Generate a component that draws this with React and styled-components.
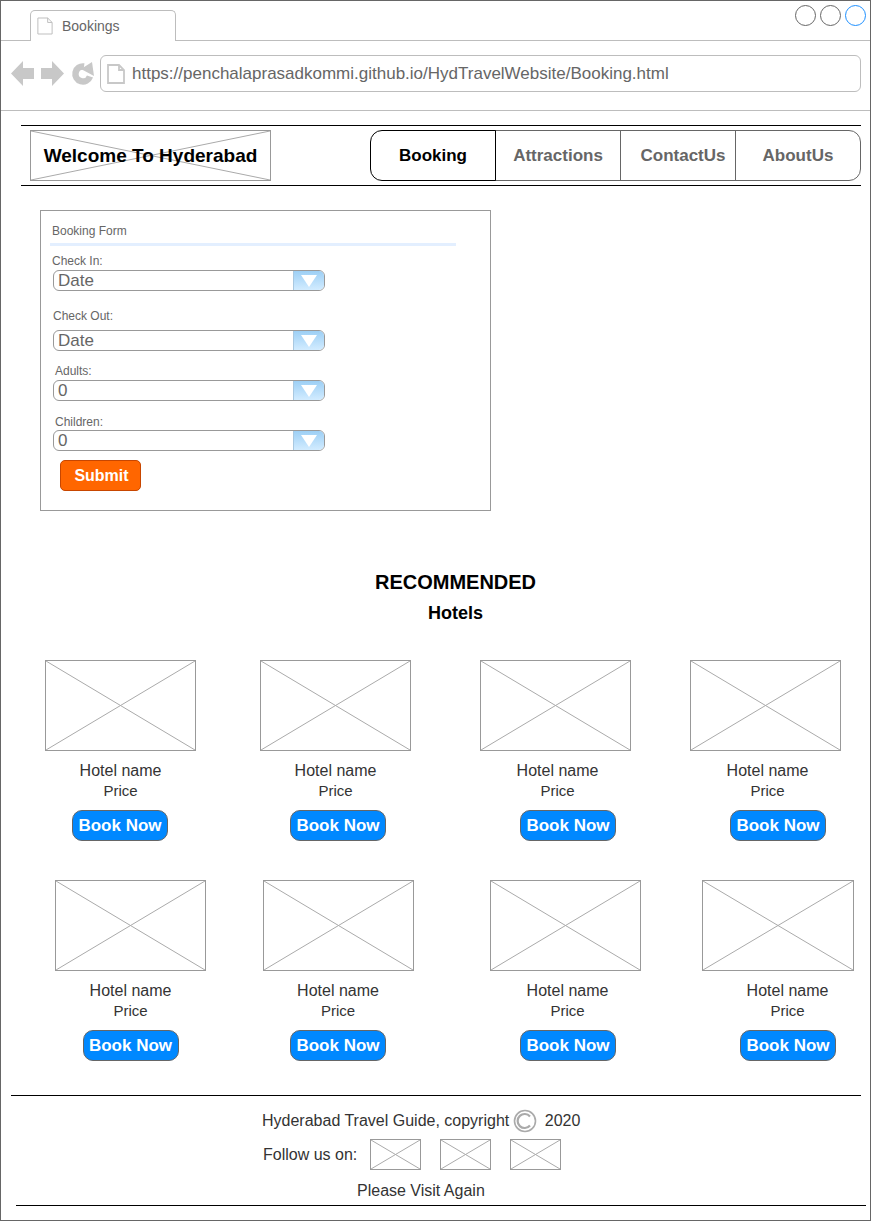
import React from "react";
import styled, { createGlobalStyle } from "styled-components";

const Global = createGlobalStyle`
  * { box-sizing: border-box; }
  html, body { margin: 0; padding: 0; background: #fff; }
  body { font-family: "Liberation Sans", Arial, sans-serif; }
`;

const Window = styled.div`
  width: 871px;
  height: 1221px;
  border: 1px solid #666;
  background: #fff;
  overflow: hidden;
`;
const TabBar = styled.div`
  height: 40px;
  display: flex;
  justify-content: space-between;
  border-bottom: 1px solid #bdbdbd;
`;
const Tab = styled.div`
  position: relative;
  margin: 9px 0 -1px 29px;
  width: 146px;
  height: 31px;
  display: flex;
  align-items: center;
  gap: 9px;
  padding: 0 0 1px 6px;
  background: #fff;
  border: 1px solid #bdbdbd;
  border-bottom: none;
  border-radius: 5px 5px 0 0;
  font-size: 14px;
  color: #666;
`;
const Dots = styled.div`
  display: flex;
  gap: 4px;
  padding: 4px 4px 0 0;
`;
const Dot = styled.span`
  width: 21px;
  height: 21px;
  border-radius: 50%;
  border: 1px solid ${p => (p.$active ? "#1e90ff" : "#666")};
`;
const AddressBar = styled.div`
  height: 70px;
  display: flex;
  align-items: flex-start;
  padding: 14px 9px 0 10px;
  border-bottom: 1px solid #bdbdbd;
`;
const NavIcons = styled.div`
  display: flex;
  gap: 7px;
  margin-top: 6px;
  margin-right: 6px;
`;
const UrlBox = styled.div`
  flex: 1;
  height: 37px;
  display: flex;
  align-items: center;
  gap: 7px;
  padding: 1px 0 0 6px;
  border: 1px solid #bdbdbd;
  border-radius: 6px;
  font-size: 17px;
  color: #666;
`;
const Header = styled.header`
  margin: 14px 0 0 20px;
  width: 840px;
  padding: 4px 0 4px 9px;
  display: flex;
  justify-content: space-between;
  border-top: 1px solid #000;
  border-bottom: 1px solid #000;
`;
const Placeholder = styled.div`
  position: relative;
  flex: none;
  width: ${p => p.$w}px;
  height: ${p => p.$h}px;
  border: 1px solid #999;
  display: flex;
  align-items: center;
  justify-content: center;
`;
const Cross = styled.svg`
  position: absolute;
  inset: 0;
  width: 100%;
  height: 100%;
`;
const LogoText = styled.span`
  position: relative;
  font-size: 19px;
  font-weight: bold;
  color: #000;
`;
const Nav = styled.nav`
  display: flex;
  height: 51px;
`;
const NavItem = styled.div`
  width: ${p => p.$w}px;
  margin-left: ${p => (p.$first ? 0 : -1)}px;
  padding-left: ${p => p.$pad || 0}px;
  display: flex;
  align-items: center;
  justify-content: center;
  font-size: 17px;
  font-weight: bold;
  color: ${p => (p.$active ? "#000" : "#666")};
  border: 1px solid ${p => (p.$active ? "#000" : "#666")};
  border-radius: ${p => (p.$first ? "12px 0 0 12px" : p.$last ? "0 12px 12px 0" : "0")};
  position: relative;
  z-index: ${p => (p.$active ? 1 : 0)};
`;
const Form = styled.form`
  margin: 24px 0 0 39px;
  width: 451px;
  height: 301px;
  border: 1px solid #999;
  display: flex;
  flex-direction: column;
  align-items: flex-start;
`;
const FormTitle = styled.div`
  margin: 13px 0 0 11px;
  font-size: 12px;
  line-height: 14px;
  color: #666;
`;
const Divider = styled.div`
  margin: 5px 0 0 9px;
  width: 406px;
  height: 3px;
  background: #e3efff;
`;
const Label = styled.label`
  margin: ${p => p.$top}px 0 ${p => p.$bottom}px ${p => p.$left}px;
  font-size: 12px;
  line-height: 14px;
  color: #666;
`;
const Select = styled.div`
  margin-left: 12px;
  width: 272px;
  height: 21px;
  display: flex;
  justify-content: space-between;
  border: 1px solid #999;
  border-radius: 6px;
  overflow: hidden;
  font-size: 17px;
  line-height: 19px;
  color: #666;
  padding-left: 4px;
`;
const SelectArrow = styled.span`
  width: 31px;
  display: flex;
  align-items: center;
  justify-content: center;
  background: linear-gradient(#9dcff5, #d2ecff);
  border-left: 1px solid #a9c8e0;
`;
const Submit = styled.button`
  margin: 9px 0 0 19px;
  width: 81px;
  height: 31px;
  padding: 0 0 0 2px;
  background: #ff6600;
  border: 1px solid #c74600;
  border-radius: 5px;
  color: #fff;
  font: bold 16px "Liberation Sans", Arial, sans-serif;
`;
const Headings = styled.div`
  padding-left: 40px;
  text-align: center;
  color: #000;
  font-weight: bold;
`;
const Heading = styled.h2`
  margin: 59px 0 0;
  font-size: 20px;
  line-height: 24px;
`;
const SubHeading = styled.h3`
  margin: 9px 0 0;
  font-size: 18px;
  line-height: 21px;
`;
const CardRow = styled.div`
  display: flex;
  margin-top: ${p => p.$top}px;
`;
const Card = styled.div`
  flex: none;
  width: ${p => p.$w || 151}px;
  margin-left: ${p => p.$gap}px;
  display: flex;
  flex-direction: column;
  align-items: center;
  color: #333;
`;
const Name = styled.div`
  margin-top: 11px;
  font-size: 16px;
  line-height: 18px;
  white-space: nowrap;
  margin-left: ${p => p.$shift * 2}px;
`;
const Price = styled.div`
  margin-top: 2px;
  font-size: 15px;
  line-height: 18px;
  margin-left: ${p => p.$shift * 2}px;
`;
const BookNow = styled.button`
  margin: 10px 0 0 ${p => p.$shift * 2}px;
  flex: none;
  width: 96px;
  height: 31px;
  padding: 0;
  background: #0088ff;
  border: 1px solid #666;
  border-radius: 10px;
  color: #fff;
  font: bold 17px "Liberation Sans", Arial, sans-serif;
`;
const FooterRule = styled.div`
  margin: ${p => p.$top}px 0 0 ${p => p.$left}px;
  width: 850px;
  height: 1px;
  background: #000;
`;
const FooterLine = styled.div`
  margin: ${p => p.$top}px 0 0 ${p => p.$left}px;
  display: flex;
  align-items: center;
  font-size: 16px;
  line-height: 18px;
  color: #333;
  height: ${p => p.$h || 18}px;
  white-space: nowrap;
`;
const Social = styled.div`
  display: flex;
  gap: 19px;
  margin-left: 13px;
`;

const X = () => (
  <Cross preserveAspectRatio="none" viewBox="0 0 100 100">
    <path d="M0 0L100 100M100 0L0 100" stroke="#aaa" strokeWidth="1" fill="none" vectorEffect="non-scaling-stroke" />
  </Cross>
);

const PageIcon = ({ w, h, stroke, sw }) => (
  <svg width={w} height={h} viewBox="0 0 18 20" style={{ flex: "none" }}>
    <path d="M1 1H12L17 6V19H1Z M12 1V6H17" fill="#fff" stroke={stroke} strokeWidth={sw} />
  </svg>
);

const Back = ({ flip }) => (
  <svg width="23" height="25" viewBox="0 0 23 25" style={flip ? { transform: "scaleX(-1)" } : undefined}>
    <path d="M0 12.5L12 0V7H23V18H12V25Z" fill="#c8c8c8" />
  </svg>
);

const Reload = () => (
  <svg width="23" height="25" viewBox="0 0 23 25">
    <path d="M13 5.5A7.5 7.5 0 1 0 19 15.5" fill="none" stroke="#c8c8c8" strokeWidth="6.5" />
    <path d="M10 8L21 1L23 15Z" fill="#c8c8c8" />
  </svg>
);

const Arrow = () => (
  <svg width="16" height="12" viewBox="0 0 16 12">
    <path d="M0 0H16L8 12Z" fill="#fff" />
  </svg>
);

const Copyright = () => (
  <svg width="24" height="24" viewBox="0 0 24 24" style={{ margin: "0 7.5px 0 4px", flex: "none" }}>
    <circle cx="12" cy="12" r="10.5" fill="none" stroke="#aaa" strokeWidth="1.6" />
    <path d="M17 7.5A7 7 0 1 0 17 16.5" fill="none" stroke="#aaa" strokeWidth="2.2" />
  </svg>
);

const rows = [
  {
    top: 36,
    cards: [
      { gap: 44, name: 0, btn: -0.5 },
      { gap: 64, name: 0, btn: 2.5 },
      { gap: 69, name: 2, btn: 12.5 },
      { gap: 59, name: 2, btn: 12.5 },
    ],
  },
  {
    top: 39,
    cards: [
      { gap: 54, name: 0, btn: 0 },
      { gap: 57, name: -0.5, btn: -0.5 },
      { gap: 76, name: 2, btn: 2.5 },
      { gap: 61, w: 152, name: 9.5, btn: 10 },
    ],
  },
];

const fields = [
  { label: "Check In:", top: 8, bottom: 2, left: 11, value: "Date" },
  { label: "Check Out:", top: 18, bottom: 7, left: 12, value: "Date" },
  { label: "Adults:", top: 13, bottom: 2, left: 14, value: "0" },
  { label: "Children:", top: 14, bottom: 1, left: 14, value: "0" },
];

const navItems = [
  { text: "Booking", w: 126, first: true, active: true },
  { text: "Attractions", w: 126 },
  { text: "ContactUs", w: 116, pad: 10 },
  { text: "AboutUs", w: 126, last: true },
];

export default function App() {
  return (
    <Window>
      <Global />
      <TabBar>
        <Tab>
          <PageIcon w={16} h={18} stroke="#bdbdbd" sw={1.1} />
          Bookings
        </Tab>
        <Dots>
          <Dot />
          <Dot />
          <Dot $active />
        </Dots>
      </TabBar>
      <AddressBar>
        <NavIcons>
          <Back />
          <Back flip />
          <Reload />
        </NavIcons>
        <UrlBox>
          <PageIcon w={18} h={20} stroke="#c8c8c8" sw={1.8} />
          https://penchalaprasadkommi.github.io/HydTravelWebsite/Booking.html
        </UrlBox>
      </AddressBar>
      <Header>
        <Placeholder $w={241} $h={51}>
          <X />
          <LogoText>Welcome To Hyderabad</LogoText>
        </Placeholder>
        <Nav>
          {navItems.map(n => (
            <NavItem key={n.text} $w={n.w} $first={n.first} $last={n.last} $active={n.active} $pad={n.pad}>
              {n.text}
            </NavItem>
          ))}
        </Nav>
      </Header>
      <Form>
        <FormTitle>Booking Form</FormTitle>
        <Divider />
        {fields.map(f => (
          <React.Fragment key={f.label}>
            <Label $top={f.top} $bottom={f.bottom} $left={f.left}>{f.label}</Label>
            <Select>
              {f.value}
              <SelectArrow><Arrow /></SelectArrow>
            </Select>
          </React.Fragment>
        ))}
        <Submit type="button">Submit</Submit>
      </Form>
      <Headings>
        <Heading>RECOMMENDED</Heading>
        <SubHeading>Hotels</SubHeading>
      </Headings>
      {rows.map((row, i) => (
        <CardRow key={i} $top={row.top}>
          {row.cards.map((c, j) => (
            <Card key={j} $gap={c.gap} $w={c.w}>
              <Placeholder $w={c.w || 151} $h={91}><X /></Placeholder>
              <Name $shift={c.name}>Hotel name</Name>
              <Price $shift={c.name}>Price</Price>
              <BookNow type="button" $shift={c.btn}>Book Now</BookNow>
            </Card>
          ))}
        </CardRow>
      ))}
      <FooterRule $top={34} $left={10} />
      <FooterLine $top={16} $left={261}>
        Hyderabad Travel Guide, copyright
        <Copyright />
        2020
      </FooterLine>
      <FooterLine $top={9} $left={262} $h={31}>
        Follow us on:
        <Social>
          <Placeholder $w={51} $h={31}><X /></Placeholder>
          <Placeholder $w={51} $h={31}><X /></Placeholder>
          <Placeholder $w={51} $h={31}><X /></Placeholder>
        </Social>
      </FooterLine>
      <FooterLine $top={12} $left={356}>Please Visit Again</FooterLine>
      <FooterRule $top={5} $left={15} />
    </Window>
  );
}
